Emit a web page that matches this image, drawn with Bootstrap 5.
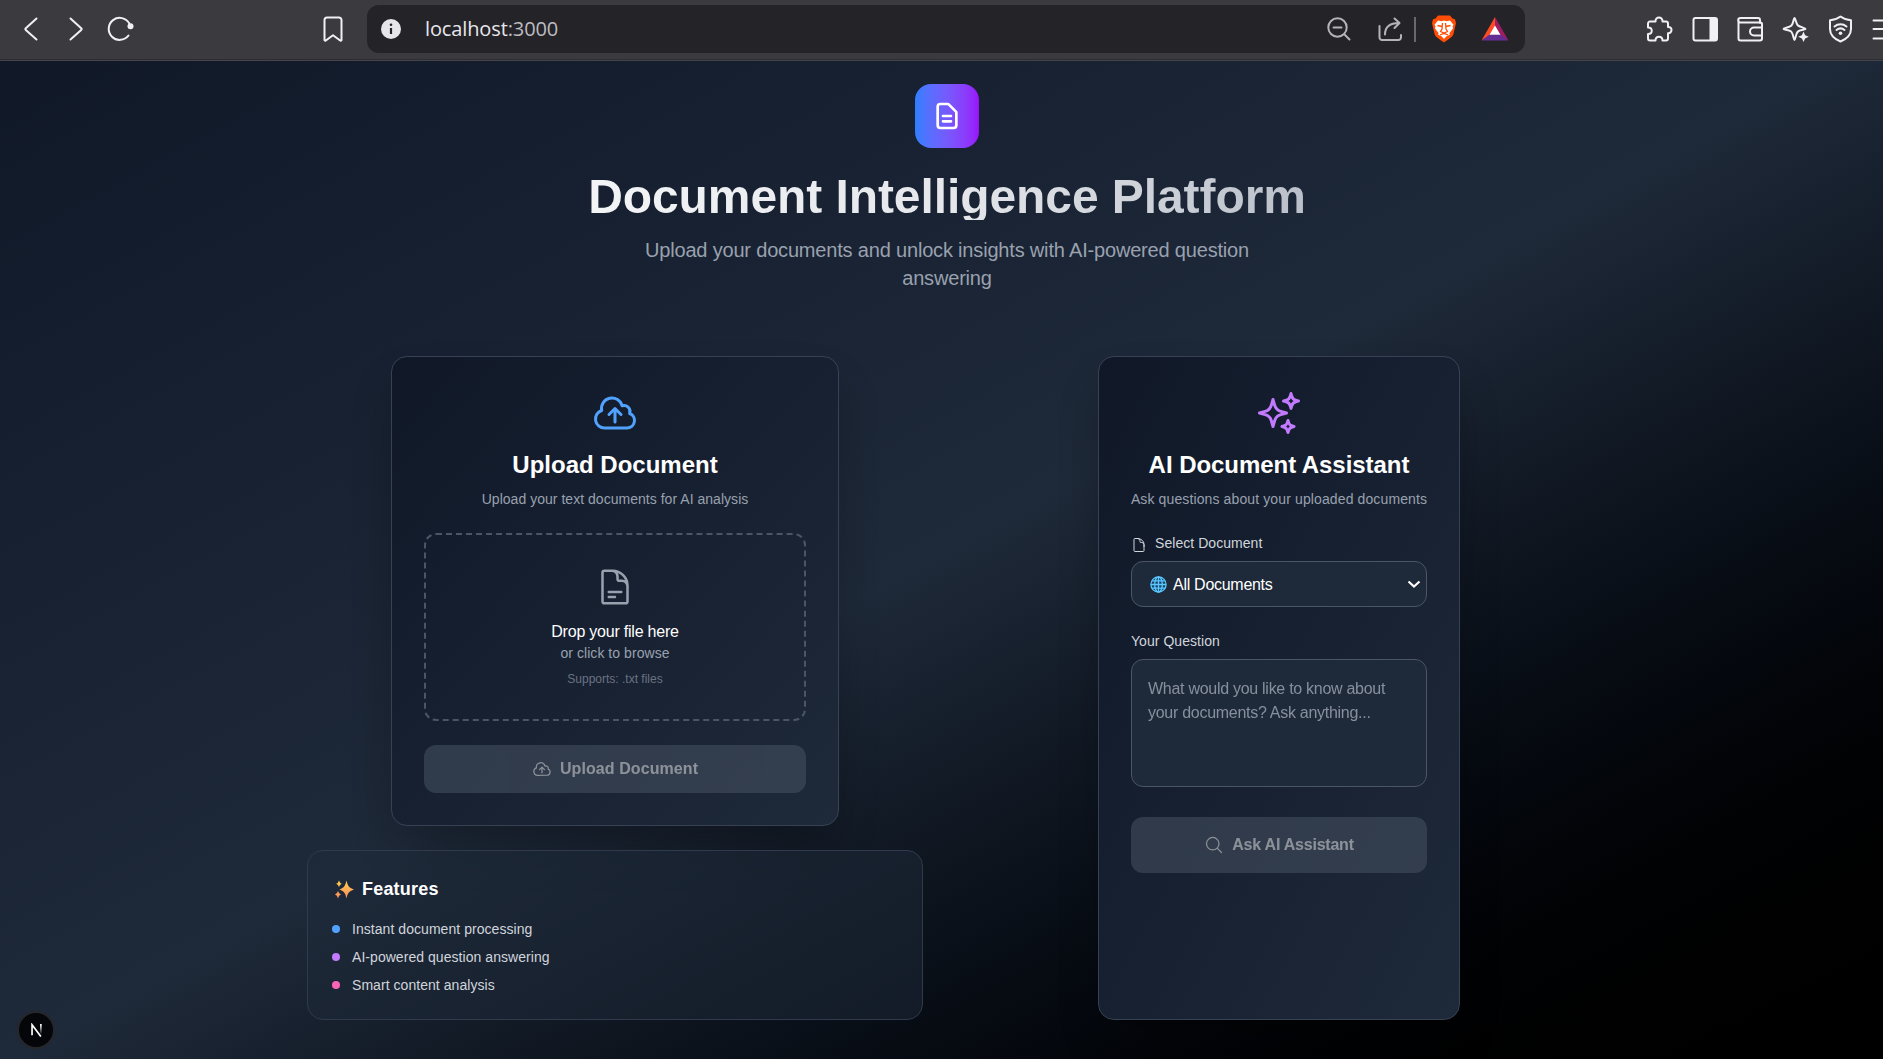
<!DOCTYPE html>
<html lang="en">
<head>
<meta charset="utf-8">
<meta name="viewport" content="width=device-width, initial-scale=1">
<title>Document Intelligence Platform</title>
<link href="https://cdn.jsdelivr.net/npm/bootstrap@5.3.0/dist/css/bootstrap.min.css" rel="stylesheet">
<style>
  html, body { height: 1059px; overflow: hidden; }
  body { background: #000; font-family: "Liberation Sans", Arial, sans-serif; font-size: 16px; line-height: 24px; color: #fff; }
  svg { display: block; flex: none; }
  .line-icon { fill: none; stroke: currentColor; stroke-width: 1.5; stroke-linecap: round; stroke-linejoin: round; }

  /* browser toolbar */
  .browser-bar { height: 61px; width: 1907px; background: #3b3a3f; border-bottom: 1px solid #45444a; box-shadow: inset 0 -1px 0 #2d2c31; padding: 0 0 3px 8px; color: #f1f0f4; }
  .tool-slot { width: 45px; flex: none; }
  .tool-icon { fill: none; stroke: currentColor; stroke-width: 2; stroke-linecap: round; stroke-linejoin: round; }
  .bookmark-slot { margin-left: 167px; width: 45px; flex: none; }
  .address-box { width: 1158px; height: 48px; background: #242328; border-radius: 12px; margin: 1px 112px 0 12px; flex: none; padding: 0 15px 0 9px; color: #b4b3b8; }
  .address-text { font: 20px/28px "Open Sans", "Noto Sans", sans-serif; color: #e8e7ec; margin-left: 19px; letter-spacing: -.12px; }
  .address-text span { color: #bdbcc1; }
  .bar-rule { width: 2px; height: 25px; background: #69686d; margin: 0 13px 0 7px; }

  /* page */
  .page { height: 998px; background: #000 linear-gradient(to bottom right in oklab, #101828, #1e2939 50%, #000) 0 -25px / 1894px 1032px no-repeat; width: 1894px; padding-top: 23px; }
  .content { width: 1280px; }
  .brand-tile { width: 64px; height: 64px; border-radius: 16px; background: linear-gradient(to right in oklab, #2b7fff, #9810fa); margin-bottom: 24px; }
  .page-title { height: 48px; padding-top: 1px; font-size: 48px; line-height: 48px; letter-spacing: -.08px; font-weight: 700; margin: 0 0 16px; background: linear-gradient(to right, #fff, #e5e7eb, #99a1af); -webkit-background-clip: text; background-clip: text; color: transparent; }
  .page-sub { font-size: 20px; line-height: 28px; letter-spacing: -.18px; color: #99a1af; width: 672px; margin: 0 auto 64px; }
  .columns { gap: 48px; }
  .column { width: 616px; }
  .panel { border: 1px solid #364153; border-radius: 16px; background: linear-gradient(to bottom right, #101828, #1e2939); padding: 32px; box-shadow: 0 25px 50px -12px rgba(0,0,0,.33); }
  .upload-panel { width: 448px; height: 470px; margin-bottom: 24px; }
  .ask-panel { width: 362px; height: 664px; }
  .panel-icon { margin: 0 auto 12px; }
  .panel-title { font-size: 24px; line-height: 32px; font-weight: 700; margin: 0 0 8px; white-space: nowrap; }
  .panel-sub { font-size: 14px; line-height: 20px; letter-spacing: .03px; color: #99a1af; margin: 0 0 24px; white-space: nowrap; }
  .ask-panel .panel-title { letter-spacing: -.05px; }
  .ask-panel .panel-sub { letter-spacing: .12px; }
  .drop-zone { border: 2px dashed #4a5565; border-radius: 12px; height: 188px; padding: 32px; margin-bottom: 24px; }
  .drop-main { padding-top: 1px; height: 24px; letter-spacing: -.22px; }
  .fs-14 { font-size: 14px; line-height: 20px; letter-spacing: .05px; }
  .fs-12 { font-size: 12px; line-height: 16px; }
  .c300 { color: #d1d5dc; } .c400 { color: #99a1af; } .c500 { color: #6a7282; }
  .action-btn, .action-btn:disabled { background: #4a5565; color: #fff; border: 0; border-radius: 12px; font-weight: 700; opacity: .5; font-size: 16px; line-height: 24px; gap: 8px; }
  .upload-btn { height: 48px; letter-spacing: .08px; } .ask-btn { height: 56px; letter-spacing: -.22px; }
  .field { border: 1px solid #4a5565; border-radius: 12px; background: #1e2939; letter-spacing: -.28px; }
  .select-field { height: 46px; padding: 0 5px 0 18px; margin: 8px 0 24px; }
  .select-value { margin-left: 6px; padding-top: 1px; }
  .question-field { width: 296px; height: 128px; padding: 17px 16px 15px; resize: none; margin: 8px 0 30px; display: block; color: #fff; outline: 0; line-height: 24px; overflow: hidden; }
  .question-field::placeholder { color: #99a1af; opacity: .85; }
  .features { height: 170px; border: 1px solid #2f3b4c; border-radius: 16px; padding: 24px; background: rgba(30,41,57,.5); }
  .features-title { font-size: 18px; line-height: 28px; letter-spacing: .2px; font-weight: 700; margin: 0 0 16px; gap: 8px; padding-left: 3px; }
  .feature-dot { width: 8px; height: 8px; border-radius: 50%; }
  .dev-badge { position: absolute; left: 17px; top: 1011px; width: 38px; height: 38px; border-radius: 50%; background: #050609; border: 2px solid #26272b; }
</style>
<script src="https://cdn.jsdelivr.net/npm/bootstrap@5.3.0/dist/js/bootstrap.bundle.min.js"></script>
</head>
<body>
<header class="browser-bar d-flex align-items-center">
  <div class="tool-slot d-flex justify-content-center"><svg class="tool-icon" width="30" height="30"><path d="M20.500 4.500 9.800 14.200q-1 .9 0 1.800L20.500 25.500"/></svg></div>
  <div class="tool-slot d-flex justify-content-center"><svg class="tool-icon" width="30" height="30"><path d="M9.500 4.500 20.200 14.200q1 .9 0 1.800L9.500 25.500"/></svg></div>
  <div class="tool-slot d-flex justify-content-center"><svg class="tool-icon" width="30" height="30"><path d="M22.500 21.500A11 11 0 1 1 23.300 9.500"/><circle cx="24.500" cy="12.200" r="3" fill="currentColor" stroke="none"/></svg></div>
  <div class="bookmark-slot d-flex justify-content-center"><svg class="tool-icon" width="30" height="30"><path d="M6.500 6a2.500 2.500 0 0 1 2.500-2.500h12A2.500 2.500 0 0 1 23.500 6v20.300l-1 .4-7.500-5.500-7.500 5.500-1-.4z"/></svg></div>
  <div class="address-box d-flex align-items-center">
    <svg width="30" height="30"><circle cx="15" cy="15" r="10" fill="#e6e5ea"/><circle cx="15" cy="10.800" r="1.300" fill="#242328"/><path d="M15 14v6" stroke="#242328" stroke-width="2.200"/></svg>
    <div class="address-text">localhost<span>:3000</span></div>
    <div class="d-flex align-items-center ms-auto">
      <svg class="tool-icon me-3" width="30" height="30"><circle cx="13.500" cy="13.500" r="9.200"/><path d="m20.500 20.500 5 5M9.500 13.500h8"/></svg>
      <svg class="tool-icon" width="34" height="30" style="margin-left:3px"><path d="M6.500 12v11.500a2.500 2.500 0 0 0 2.500 2.500h16.500a2.500 2.500 0 0 0 2.500-2.500V21M12 20.500c0-7 4-11.500 14-11.500M21.500 4.500l5 4.500-5 5"/></svg>
      <div class="bar-rule"></div>
      <svg width="30" height="30"><path d="M9 1.500h12l2.500 3 2.500.800 1 4-2.500 10.500c-.5 3-5 5.500-9.500 8.700C10.500 25.300 6 22.800 5.500 19.800L3 9.300l1-4 2.500-.800z" fill="#ff4d06"/><path d="M9 6.500 12.500 7.200 15 6.500l2.500.7L21 6.500l3.500 4.300-1 1.700.5 2-3.500 4.500.3 1.700-3.300 1.500L15 25l-2.500-2.800-3.300-1.500.3-1.700L6 14.500l.5-2-1-1.700z" fill="#fff"/><path d="m8.500 11.500 4.500 1M21.500 11.500l-4.500 1M13.500 9l-.5 6-1.500 2.500L15 19l3.500-1.500L17 15l-.5-6M11 21l4-1.700 4 1.700" fill="none" stroke="#ff4d06" stroke-width="1.300"/></svg>
      <svg width="30" height="30" style="margin-left:21px"><path d="M15 3 1.500 26.500 10 21.500l5-9z" fill="#ff4a22"/><path d="M15 3 28.500 26.500 20.500 21.500 15 12.500z" fill="#a01d64"/><path d="M1.500 26.500h27L20.500 20.500h-11z" fill="#652e94"/><path d="m15 11.500 5.500 9.300h-11z" fill="#fff"/></svg>
    </div>
  </div>
  <div class="tool-slot d-flex justify-content-center"><svg class="tool-icon" width="30" height="30" viewBox="1 0 30 30"><path d="M6 7.500h5.500V7a3.500 3.500 0 0 1 7 0v.5H22a2 2 0 0 1 2 2V13c4.700-.5 4.700 6.500 0 6.200v5.300a2 2 0 0 1-2 2h-3.500c0-5-7-5-7 0H6a2 2 0 0 1-2-2V20c5 0 5-6.500 0-6.500v-4a2 2 0 0 1 2-2z"/></svg></div>
  <div class="tool-slot d-flex justify-content-center"><svg class="tool-icon" width="30" height="30"><rect x="3.500" y="4" width="23.500" height="22.500" rx="2"/><path d="M19.500 4h7.500v22.500h-7.500z" fill="currentColor" stroke="none"/></svg></div>
  <div class="tool-slot d-flex justify-content-center"><svg class="tool-icon" width="30" height="30"><path d="M25 9V6a2 2 0 0 0-2-2H5.500a2.300 2.300 0 0 0 0 4.600H25.500a1.500 1.500 0 0 1 1.500 1.500v14.400a2 2 0 0 1-2 2H5.500a2 2 0 0 1-2-2V6.500M27 13.500h-8a4 4 0 0 0 0 8h8"/></svg></div>
  <div class="tool-slot d-flex justify-content-center"><svg class="tool-icon" width="30" height="30" viewBox="-1 0 30 30"><path d="M13.500 4c1 0 1.500 5.500 3.200 7.200S24.500 14 24.500 15s-6 .7-8 3-2 8-3 8-1-5.500-3-8-8-2-8-3 6-1.500 8-3.500 2-7.500 3-7.500z"/><path d="m22.500 17.500 1.600 3.700 3.700 1.600-3.700 1.600-1.600 3.700-1.600-3.700-3.700-1.600 3.700-1.600z" fill="currentColor" stroke="none"/></svg></div>
  <div class="tool-slot d-flex justify-content-center"><svg class="tool-icon" width="30" height="30"><path d="M15.500 2.500c3 2.300 6 3.500 10.500 3.800V15c0 6.500-4.500 10-10.500 12.500C9.500 25 5 21.500 5 15V6.300c4.500-.3 7.500-1.500 10.500-3.800z"/><path d="M9.500 12.500c3.500-3 8.500-3 12 0M11.500 16c2.500-2 5.500-2 8 0"/><circle cx="15.500" cy="19.300" r="1.800" fill="currentColor" stroke="none"/></svg></div>
  <div class="tool-slot d-flex justify-content-center"><svg class="tool-icon" width="30" height="30"><path d="M3.500 6.500h24M3.500 15h24M3.500 24.500h24"/></svg></div>
</header>

<main class="page">
  <div class="content mx-auto">
    <section class="text-center">
      <div class="brand-tile mx-auto d-flex align-items-center justify-content-center">
        <svg class="line-icon" width="32" height="32" viewBox="0 0 24 24" style="stroke-width:2"><path d="M9 12h6m-6 4h6m2 5H7a2 2 0 0 1-2-2V5a2 2 0 0 1 2-2h5.586a1 1 0 0 1 .707.293l5.414 5.414a1 1 0 0 1 .293.707V19a2 2 0 0 1-2 2z"/></svg>
      </div>
      <h1 class="page-title">Document Intelligence Platform</h1>
      <p class="page-sub">Upload your documents and unlock insights with AI-powered question<br>answering</p>
    </section>

    <div class="columns d-flex">
      <div class="column d-flex flex-column align-items-center">
        <section class="panel upload-panel text-center">
          <svg class="line-icon panel-icon" style="color:#51a2ff" width="48" height="48" viewBox="0 0 24 24"><path d="M12 16.500V9.750m0 0 3 3m-3-3-3 3M6.750 19.500a4.500 4.500 0 0 1-1.410-8.775 5.250 5.250 0 0 1 10.233-2.330 3 3 0 0 1 3.758 3.848A3.752 3.752 0 0 1 18 19.500H6.750Z"/></svg>
          <h2 class="panel-title">Upload Document</h2>
          <p class="panel-sub">Upload your text documents for AI analysis</p>
          <div class="drop-zone">
            <svg class="line-icon panel-icon c400" width="40" height="40" viewBox="0 0 24 24"><path d="M19.500 14.250v-2.625a3.375 3.375 0 0 0-3.375-3.375h-1.500A1.125 1.125 0 0 1 13.500 7.125v-1.500a3.375 3.375 0 0 0-3.375-3.375H8.250m0 12.750h7.500m-7.500 3H12M10.500 2.250H5.625c-.621 0-1.125.504-1.125 1.125v17.250c0 .621.504 1.125 1.125 1.125h12.750c.621 0 1.125-.504 1.125-1.125V11.250a9 9 0 0 0-9-9Z"/></svg>
            <div class="drop-main">Drop your file here</div>
            <div class="fs-14 c400">or click to browse</div>
            <div class="fs-12 c500 mt-2">Supports: .txt files</div>
          </div>
          <button class="btn action-btn upload-btn w-100 d-flex align-items-center justify-content-center" disabled>
            <svg class="line-icon" width="20" height="20" viewBox="0 0 24 24"><path d="M12 16.500V9.750m0 0 3 3m-3-3-3 3M6.750 19.500a4.500 4.500 0 0 1-1.410-8.775 5.250 5.250 0 0 1 10.233-2.330 3 3 0 0 1 3.758 3.848A3.752 3.752 0 0 1 18 19.500H6.750Z"/></svg>
            Upload Document
          </button>
        </section>

        <section class="features w-100">
          <h3 class="features-title d-flex align-items-center">
            <svg width="19" height="19" viewBox="0 0 19 19"><defs><linearGradient id="spark" x1="0" y1="0" x2="0" y2="1"><stop offset="0" stop-color="#ffd24d"/><stop offset="1" stop-color="#ff8a5c"/></linearGradient></defs><g fill="url(#spark)"><path d="M11.500.500c1.200 5 2.200 7.200 7.500 9-5.300 1.700-6.300 3.700-7.500 9-1.200-5.300-2.200-7.300-7-9 4.800-1.800 5.800-4 7-9z"/><path d="M4 .5q.700 2.500 2.800 3.200Q4.700 4.400 4 7 3.300 4.400 1.200 3.700 3.300 3 4 .5zM3 11q.700 2.800 3 3.500Q3.700 15.200 3 18.500q-.7-3.300-3-4Q2.300 13.800 3 11z"/></g></svg>
            Features
          </h3>
          <div class="d-flex flex-column gap-2 fs-14 c300">
            <div class="d-flex align-items-center" style="gap:12px"><span class="feature-dot" style="background:#51a2ff"></span>Instant document processing</div>
            <div class="d-flex align-items-center" style="gap:12px"><span class="feature-dot" style="background:#c27aff"></span>AI-powered question answering</div>
            <div class="d-flex align-items-center" style="gap:12px"><span class="feature-dot" style="background:#fb64b6"></span>Smart content analysis</div>
          </div>
        </section>
      </div>

      <div class="column d-flex flex-column align-items-center">
        <section class="panel ask-panel">
          <div class="text-center">
            <svg class="line-icon panel-icon" style="color:#c27aff" width="48" height="48" viewBox="0 0 24 24"><path d="M9.813 15.904 9 18.750l-.813-2.846a4.500 4.500 0 0 0-3.090-3.090L2.250 12l2.846-.813a4.500 4.500 0 0 0 3.090-3.090L9 5.250l.813 2.846a4.500 4.500 0 0 0 3.090 3.090L15.750 12l-2.846.813a4.500 4.500 0 0 0-3.090 3.090ZM18.259 8.715 18 9.750l-.259-1.035a3.375 3.375 0 0 0-2.455-2.456L14.250 6l1.036-.259a3.375 3.375 0 0 0 2.455-2.456L18 2.250l.259 1.035a3.375 3.375 0 0 0 2.456 2.456L21.750 6l-1.035.259a3.375 3.375 0 0 0-2.456 2.456ZM16.894 20.567 16.500 21.750l-.394-1.183a2.250 2.250 0 0 0-1.423-1.423L13.500 18.750l1.183-.394a2.250 2.250 0 0 0 1.423-1.423l.394-1.183.394 1.183a2.250 2.250 0 0 0 1.423 1.423l1.183.394-1.183.394a2.250 2.250 0 0 0-1.423 1.423Z"/></svg>
            <h2 class="panel-title">AI Document Assistant</h2>
            <p class="panel-sub d-flex justify-content-center">Ask questions about your uploaded documents</p>
          </div>
          <div class="fs-14 c300 d-flex gap-2">
            <svg class="line-icon" style="margin-top:4px" width="16" height="16" viewBox="0 0 24 24"><path d="M19.500 14.250v-2.625a3.375 3.375 0 0 0-3.375-3.375h-1.500A1.125 1.125 0 0 1 13.500 7.125v-1.500a3.375 3.375 0 0 0-3.375-3.375H8.250m2.250 0H5.625c-.621 0-1.125.504-1.125 1.125v17.250c0 .621.504 1.125 1.125 1.125h12.750c.621 0 1.125-.504 1.125-1.125V11.250a9 9 0 0 0-9-9Z"/></svg>
            Select Document
          </div>
          <div class="field select-field d-flex align-items-center">
            <svg width="17" height="17" viewBox="0 0 17 17" fill="none" stroke="#5cc8ff" stroke-width="1.300"><circle cx="8.500" cy="8.500" r="7.600" fill="#17456b"/><ellipse cx="8.500" cy="8.500" rx="3.800" ry="7.600"/><path d="M8.500 1v15M1 8.500h15M2.200 4.800h12.600M2.200 12.200h12.600"/></svg>
            <span class="select-value">All Documents</span>
            <svg class="ms-auto" width="14" height="14" fill="none" stroke="#fff" stroke-width="2.200"><path d="m1.500 4.500 5.500 5 5.500-5"/></svg>
          </div>
          <label class="fs-14 c300 d-block" for="question">Your Question</label>
          <textarea id="question" class="field question-field" placeholder="What would you like to know about your documents? Ask anything..."></textarea>
          <button class="btn action-btn ask-btn w-100 d-flex align-items-center justify-content-center" disabled>
            <svg class="line-icon" width="20" height="20" viewBox="0 0 24 24"><path d="m21 21-5.197-5.197m0 0A7.500 7.500 0 1 0 5.196 5.196a7.500 7.500 0 0 0 10.607 10.607Z"/></svg>
            Ask AI Assistant
          </button>
        </section>
      </div>
    </div>
  </div>
</main>

<div class="dev-badge d-flex align-items-center justify-content-center">
  <svg width="13" height="14" viewBox="0 0 14 16" fill="none" stroke-width="1.900"><defs><linearGradient id="fade" gradientUnits="userSpaceOnUse" x1="0" y1="2" x2="0" y2="13"><stop offset="0" stop-color="#fff"/><stop offset="1" stop-color="#fff" stop-opacity="0"/></linearGradient></defs><path d="M1.900 14V2L12 15.500" stroke="#fff"/><path d="M12 1v12" stroke="url(#fade)"/></svg>
</div>
</body>
</html>
